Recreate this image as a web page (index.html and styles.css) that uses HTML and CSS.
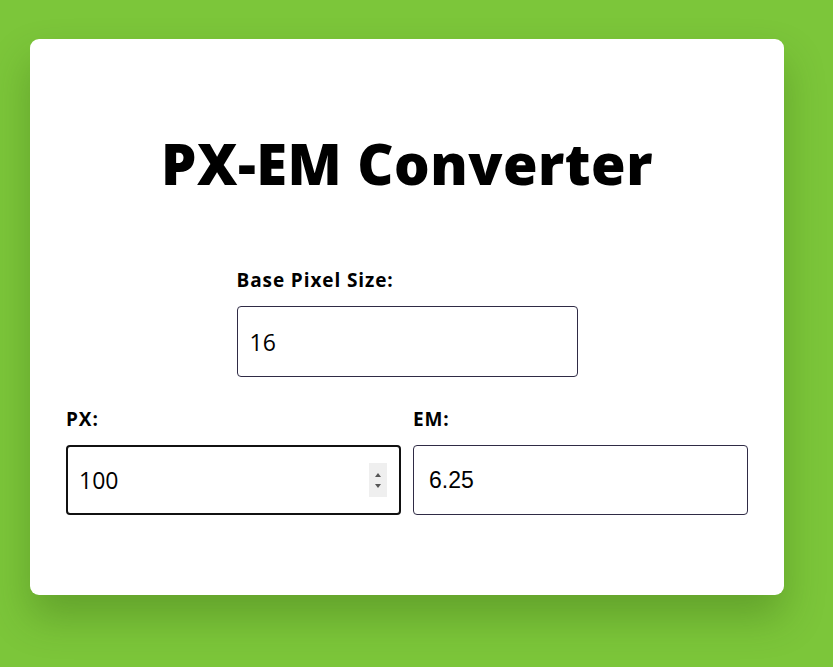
FILE: index.html
```html
<!DOCTYPE html>
<html lang="en">
<head>
  <meta charset="UTF-8" />
  <meta name="viewport" content="width=device-width, initial-scale=1.0"/>
  <title>PX-EM Converter</title>
  <link rel="stylesheet" href="styles.css">
</head>
<body>
  <div class="card">
    <h1>PX-EM Converter</h1>

    <div class="base">
      <label for="base">Base Pixel Size:</label>
      <input type="number" id="base" value="16">
    </div>

    <div class="fields">
      <div class="field">
        <label for="px">PX:</label>
        <div class="px-box">
          <span class="px-value">100</span>
          <span class="spin">
            <svg width="8" height="6" viewBox="0 0 8 6"><path d="M4 1 L7 5 L1 5 Z" fill="#555"/></svg>
            <svg width="8" height="6" viewBox="0 0 8 6"><path d="M1 1 L7 1 L4 5 Z" fill="#555"/></svg>
          </span>
        </div>
      </div>
      <div class="field">
        <label for="em">EM:</label>
        <input type="text" id="em" class="em" value="6.25" readonly>
      </div>
    </div>
  </div>
</body>
</html>
```

FILE: styles.css
```css
* {
  margin: 0;
  padding: 0;
  box-sizing: border-box;
}

body {
  background: #7cc63a;
  font-family: "Open Sans", sans-serif;
  height: 100vh;
  padding-top: 39px;
  padding-left: 30px;
}

.card {
  width: 754px;
  height: 556px;
  background: white;
  border-radius: 9px;
  padding: 86px 36px 0;
  box-shadow: 0 22px 40px rgba(40, 80, 10, 0.3);
}

h1 {
  text-align: center;
  font-size: 56px;
  font-weight: 800;
  line-height: 76px;
  letter-spacing: 0.5px;
  color: #000;
}

.base {
  width: 341px;
  margin: 67px auto 0;
}

label {
  display: block;
  font-size: 19px;
  font-weight: 700;
  letter-spacing: 0.9px;
  color: #000;
  margin-bottom: 13px;
  line-height: 25px;
}

input,
.px-box {
  width: 100%;
  height: 71px;
  border: 1px solid #2f2b45;
  border-radius: 4px;
  padding: 0 12px;
  font-family: "Open Sans", sans-serif;
  font-size: 23px;
  color: #000;
  outline: none;
  -moz-appearance: textfield;
}

input::-webkit-inner-spin-button {
  -webkit-appearance: none;
}

.fields {
  display: grid;
  grid-template-columns: 1fr 1fr;
  gap: 12px;
  margin-top: 30px;
}

.fields input,
.fields .px-box {
  height: 70px;
}

.px-box {
  display: flex;
  align-items: center;
  justify-content: space-between;
  border: 2px solid #111;
  padding: 0 12px 0 11px;
}

.spin {
  display: flex;
  flex-direction: column;
  justify-content: center;
  align-items: center;
  gap: 5px;
  width: 18px;
  height: 34px;
  background: #efefef;
}

.em {
  font-family: "Liberation Sans", Arial, sans-serif;
  padding-left: 15px;
}
```
